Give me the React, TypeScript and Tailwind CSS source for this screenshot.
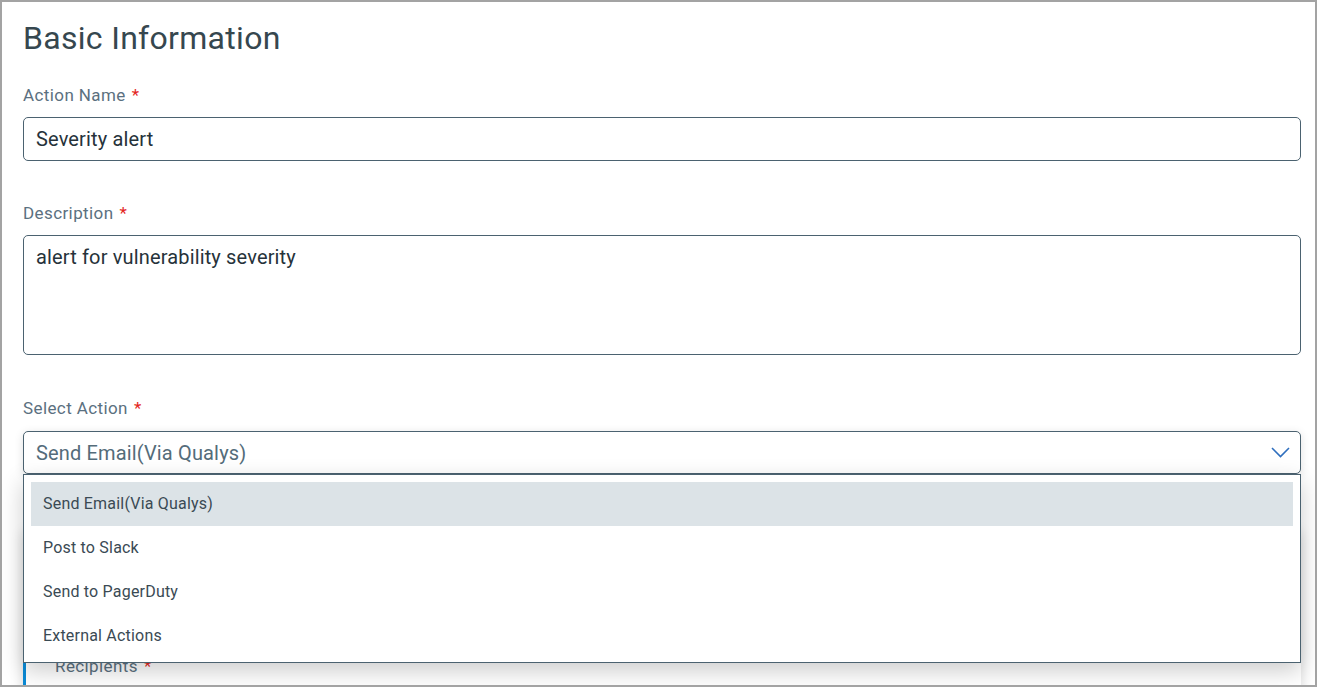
const labelClassName = 'h-6 text-[17px] leading-6 tracking-[0.4px] text-[#5b7080]'
const fieldClassName = 'w-full rounded-[5px] border border-[#4b6270] bg-white px-3 text-[20px] tracking-[0.15px] text-[#26323a] outline-none'

const Required = () => <span className="ml-[6px] text-[#e3261d]">*</span>

const options = ['Send Email(Via Qualys)', 'Post to Slack', 'Send to PagerDuty', 'External Actions']

const App = () => {
  return (
    <div className="relative h-[687px] w-[1317px] overflow-hidden border-2 border-[#a3a3a3] bg-white pr-[14px] pl-[21px] font-[Roboto,'Noto_Sans',sans-serif]">
      <h1 className="mt-[16px] h-[40px] text-[32px] leading-[40px] font-normal tracking-[0.3px] text-[#36474f]">Basic Information</h1>

      <div className={`mt-[25px] ${labelClassName}`}>Action Name<Required /></div>
      <input className={`mt-[10px] h-[44px] ${fieldClassName}`} defaultValue="Severity alert" />

      <div className={`mt-[40px] ${labelClassName}`}>Description<Required /></div>
      <textarea className={`mt-[10px] block h-[120px] resize-none py-[6px] leading-[30px] ${fieldClassName}`} defaultValue="alert for vulnerability severity" />

      <div className={`mt-[41px] ${labelClassName}`}>Select Action<Required /></div>
      <div className="relative mt-[11px]">
        <div className="flex h-[43px] items-center justify-between rounded-[5px] border border-[#4b6270] bg-white pr-[10px] pl-3 shadow-[0_2px_10px_rgba(0,0,0,0.12)]">
          <span className="text-[20px] tracking-[0.15px] text-[#546c7a]">Send Email(Via Qualys)</span>
          <svg width="19" height="11" viewBox="0 0 19 11" fill="none">
            <path d="M1 1l8.5 8.5L18 1" stroke="#2f6fbe" strokeWidth="1.6" />
          </svg>
        </div>

        <div className="absolute top-full right-0 left-0 z-10 border border-[#4b6270] bg-white px-[7px] pt-[7px] pb-[4px] shadow-[0_8px_22px_rgba(0,0,0,0.2)]">
          {options.map((option, i) => (
            <div key={option} className={`flex h-[44px] items-center px-3 text-[16px] tracking-[0.2px] text-[#3a4a54] ${i === 0 ? 'bg-[#dce3e7]' : ''}`}>
              {option}
            </div>
          ))}
        </div>
      </div>

      <div className="mt-[56px] h-[200px] border-l-[3px] border-[#0a8ad6] bg-white pt-[124px] pl-[29px] shadow-[0_2px_12px_rgba(0,0,0,0.15)]">
        <div className={labelClassName}>Recipients<Required /></div>
      </div>
    </div>
  )
}

export default App
